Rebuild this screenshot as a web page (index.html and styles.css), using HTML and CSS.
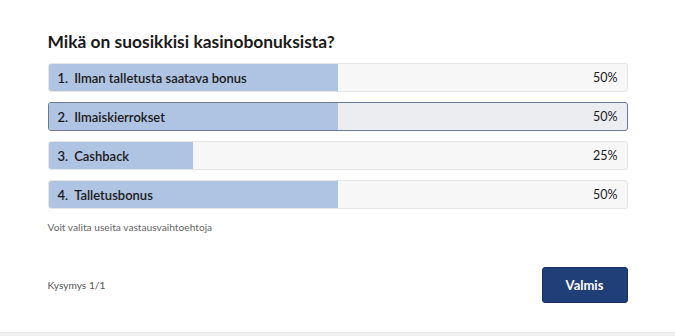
FILE: index.html
```html
<!DOCTYPE html>
<html lang="fi">
<head>
    <meta charset="UTF-8">
    <title>Kysely</title>
    <link rel="stylesheet" href="styles.css">
</head>
<body>
    <div class="poll">
        <h2>Mikä on suosikkisi kasinobonuksista?</h2>

        <div class="answers">
            <div class="answer">
                <div class="fill" style="width: 50%"></div>
                <span class="label"><span class="num">1.</span>Ilman talletusta saatava bonus</span>
                <span class="pct">50%</span>
            </div>
            <div class="answer selected">
                <div class="fill" style="width: 50%"></div>
                <span class="label"><span class="num">2.</span>Ilmaiskierrokset</span>
                <span class="pct">50%</span>
            </div>
            <div class="answer">
                <div class="fill" style="width: 25%"></div>
                <span class="label"><span class="num">3.</span>Cashback</span>
                <span class="pct">25%</span>
            </div>
            <div class="answer">
                <div class="fill" style="width: 50%"></div>
                <span class="label"><span class="num">4.</span>Talletusbonus</span>
                <span class="pct">50%</span>
            </div>
        </div>

        <p class="hint">Voit valita useita vastausvaihtoehtoja</p>

        <div class="footer">
            <span class="counter">Kysymys 1/1</span>
            <button>Valmis</button>
        </div>
    </div>
    <div class="bottom-bar"></div>
</body>
</html>
```

FILE: styles.css
```css
body {
    margin: 0;
    font-family: Lato, "Open Sans", sans-serif;
    background-color: white;
    color: #1a1a1a;
}

.poll {
    width: 580px;
    margin: 0 auto;
    padding-top: 30px;
    height: 302px;
    box-sizing: border-box;
}

h2 {
    font-size: 17.4px;
    font-weight: bold;
    margin: 0 0 10px 0;
    line-height: 23px;
}

.answers {
    display: flex;
    flex-direction: column;
    gap: 10px;
}

.answer {
    position: relative;
    height: 29px;
    border: 1px solid #e6e6e6;
    border-radius: 3px;
    background-color: #f7f7f7;
    display: flex;
    align-items: center;
    justify-content: space-between;
    padding: 0 9px 0 9px;
    box-sizing: border-box;
    font-size: 13px;
    overflow: hidden;
}

.answer.selected {
    border-color: #6d7a96;
    background-color: #ebedf1;
}

.fill {
    position: absolute;
    left: 0;
    top: 0;
    bottom: 0;
    background-color: #afc3e3;
}

.label, .pct {
    position: relative;
}

.label {
    font-weight: 600;
}

.pct {
    font-size: 12.5px;
}

.num {
    margin-right: 6px;
}

.hint {
    font-size: 10.2px;
    color: #666;
    margin: 12px 0 0 0;
}

.footer {
    display: flex;
    justify-content: space-between;
    align-items: center;
    margin-top: 34px;
}

.counter {
    font-size: 10.2px;
    color: #555;
}

button {
    width: 86px;
    height: 36px;
    background-color: #203f78;
    color: white;
    border: 1px solid #183060;
    border-radius: 3px;
    font-family: Lato, sans-serif;
    font-weight: bold;
    font-size: 13px;
}

.bottom-bar {
    height: 4px;
    margin-top: 30px;
    border-top: 1px solid #e8e8e8;
    background-color: #f0f0f0;
}
```
